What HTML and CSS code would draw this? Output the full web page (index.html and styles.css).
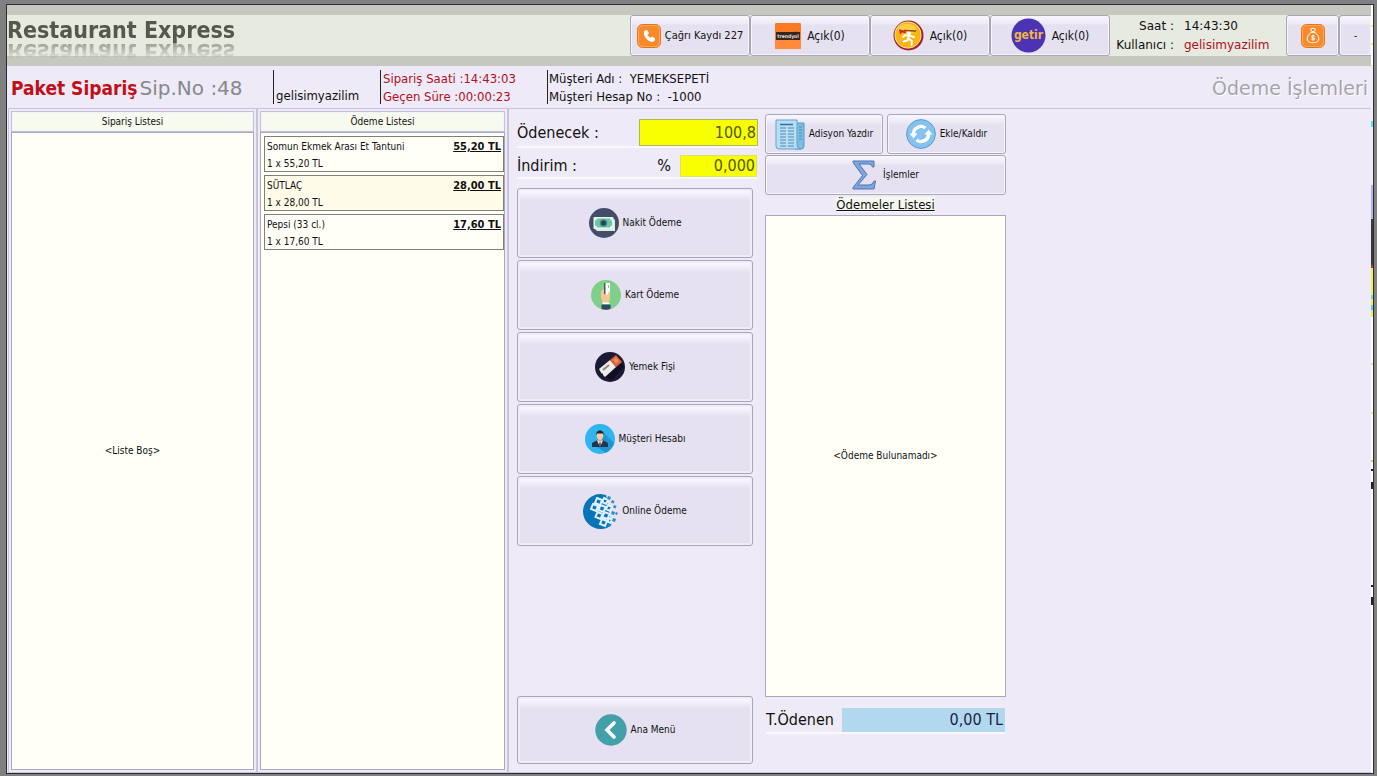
FILE: index.html
```html
<!DOCTYPE html>
<html lang="tr">
<head>
<meta charset="utf-8">
<title>Restaurant Express</title>
<link rel="stylesheet" href="styles.css">
</head>
<body>
<div class="window">
  <div class="app">
    <header class="banner">
      <h1 class="brand">Restaurant Express</h1>
      <button class="btn top-btn">
        <svg width="24" height="24" viewBox="0 0 24 24"><rect x=".5" y=".5" width="23" height="23" rx="5" fill="#f98a2c" stroke="#e8741a"/><rect x="1.500" y="1.500" width="21" height="21" rx="4" fill="none" stroke="#ffab5c"/><path d="M8 6.500l2-.8 2 3.600-1.500 1.500c.7 1.500 1.700 2.400 3 3l1.600-1.400 3 2.200c0 2-1.300 3.300-3 3.300C11 17.500 7 13 6.800 9c0-1.200.4-2 1.200-2.500z" fill="#fff"/></svg>
        <span>Çağrı Kaydı 227</span>
      </button>
      <button class="btn top-btn open">
        <svg width="26" height="26" viewBox="0 0 26 26"><rect width="26" height="26" rx="1" fill="#f97a24"/><rect y="16" width="26" height="10" fill="#ff8a3c"/><path d="M17 9l5-1 1 2h-6z" fill="#e8542a"/><rect x="1" y="9" width="24" height="8" fill="#33271f"/><text x="13" y="15" text-anchor="middle" font-size="5" font-weight="bold" fill="#e8dccf">trendyol</text></svg>
        <span>Açık(0)</span>
      </button>
      <button class="btn top-btn open">
        <svg width="31" height="31" viewBox="0 0 31 31"><circle cx="15.500" cy="15.500" r="15" fill="#a61d22"/><circle cx="15" cy="15" r="13.500" fill="#fff1c2"/><circle cx="15" cy="15" r="12.700" fill="#fbb416"/><ellipse cx="14" cy="9" rx="9" ry="5" fill="#fdd044"/><path d="M6 9l4 1.500 2-1 1 4-4-1-2 2z" fill="#e2231a"/><path d="M12 10.500l11 .5" stroke="#8a4a12" stroke-width="1.300"/><circle cx="16" cy="13.500" r="2" fill="#fff"/><path d="M16 16l-4-1-2 2M15.500 16.500l-1 4-4 1M16 19l3 2-.5 4M17 16l4 1" fill="none" stroke="#fff" stroke-width="1.900" stroke-linecap="round" stroke-linejoin="round"/></svg>
        <span>Açık(0)</span>
      </button>
      <button class="btn top-btn open">
        <svg width="35" height="35" viewBox="0 0 35 35"><circle cx="17.500" cy="17.500" r="17" fill="#4b33b4"/><text x="17.500" y="21" text-anchor="middle" font-size="12" font-weight="bold" fill="#f3b545">getir</text></svg>
        <span>Açık(0)</span>
      </button>
      <dl class="session">
        <dt>Saat :</dt><dd>14:43:30</dd>
        <dt>Kullanıcı :</dt><dd class="user">gelisimyazilim</dd>
      </dl>
      <button class="btn money-btn" aria-label="Kasa">
        <svg width="24" height="24" viewBox="0 0 24 24"><rect x=".5" y=".5" width="23" height="23" rx="5" fill="#f98a2c" stroke="#e8741a"/><rect x="1.500" y="1.500" width="21" height="21" rx="4" fill="none" stroke="#ffab5c"/><path d="M9.500 5l1.200 2.500h2.600L14.500 5l-2.500-.8zM10 8.500c-2.500 2-3.800 4-3.800 6.500s2 3.700 5.800 3.700 5.800-1.200 5.800-3.700-1.300-4.500-3.800-6.500z" fill="none" stroke="#fff"/><path d="M13.700 12.200c-.8-.8-3.200-.8-3.200.4 0 1.400 3.200.7 3.200 2.200 0 1.300-2.600 1.200-3.400.3M12 10.800v5.800" fill="none" stroke="#fff"/></svg>
      </button>
      <button class="btn min-btn">-</button>
    </header>

    <section class="order">
      <p class="order-type"><b>Paket Sipariş</b><span>Sip.No :48</span></p>
      <p class="cell waiter">gelisimyazilim</p>
      <p class="cell times">Sipariş Saati :14:43:03<br>Geçen Süre :00:00:23</p>
      <p class="cell customer">Müşteri Adı :&nbsp; YEMEKSEPETİ<br>Müşteri Hesap No :&nbsp; -1000</p>
      <h2 class="page-title">Ödeme İşlemleri</h2>
    </section>

    <main class="content">
      <section class="panel">
        <h3 class="panel-title">Sipariş Listesi</h3>
        <div class="list empty">&lt;Liste Boş&gt;</div>
      </section>
      <section class="panel">
        <h3 class="panel-title">Ödeme Listesi</h3>
        <ul class="list items">
          <li class="item"><span>Somun Ekmek Arası Et Tantuni</span><b>55,20 TL</b><span>1 x 55,20 TL</span></li>
          <li class="item alt"><span>SÜTLAÇ</span><b>28,00 TL</b><span>1 x 28,00 TL</span></li>
          <li class="item"><span>Pepsi (33 cl.)</span><b>17,60 TL</b><span>1 x 17,60 TL</span></li>
        </ul>
      </section>

      <div class="work">
        <section class="pay">
          <div class="field due">
            <label for="due">Ödenecek :</label>
            <input id="due" value="100,8">
          </div>
          <div class="field discount">
            <label for="discount">İndirim :</label>
            <span>%</span>
            <input id="discount" value="0,000">
          </div>
          <div class="methods">
            <button class="btn method">
              <svg width="30" height="30" viewBox="0 0 30 30"><circle cx="15" cy="15" r="15" fill="#434d6b"/><path d="M5 10h18l3 2v11H8l-3-3z" fill="#d9efdf"/><rect x="4.500" y="9" width="20" height="12" rx="1" fill="#e5f5e6"/><path d="M8 10.500h13q0 2 2 2v5q-2 0-2 2H8q0-2-2-2v-5q2 0 2-2z" fill="#6cc5a4"/><circle cx="14.500" cy="15" r="3.700" fill="#3f8f84"/><circle cx="14.500" cy="15" r="2.500" fill="#29445a"/></svg>
              <span>Nakit Ödeme</span>
            </button>
            <button class="btn method">
              <svg width="30" height="30" viewBox="0 0 30 30"><circle cx="15" cy="15" r="15" fill="#7fd08a"/><path d="M13 3h6v12h-6z" fill="#fff"/><path d="M13 3h1.500v12H13z" fill="#4d5b55"/><path d="M17 5h1v3h-1z" fill="#9ba"/><path d="M10 12l2-3 1 1v4l4 1 .5-3.500L19 12v7l-2 4h-5l-2-5z" fill="#f5c795"/><path d="M11.500 22.500h7v2h-7z" fill="#fff"/><path d="M10.500 24.500h9V29a15 15 0 0 1-9 0z" fill="#304868"/></svg>
              <span>Kart Ödeme</span>
            </button>
            <button class="btn method">
              <svg width="30" height="30" viewBox="0 0 30 30"><circle cx="15" cy="15" r="15" fill="#1b1a35"/><path d="M10 25L27 11l2 3.500-12 14z" fill="#0f0e22"/><path d="M4 17L15 8l6 7-11 10-2-2 0-1.500-1.500 0z" fill="#eeece4"/><path d="M15 8l6-5 6 7-6 5z" fill="#dd6338"/><path d="M18 8l3-2.500 3 3.500-3 2.500z" fill="#ef8a5d"/><path d="M8 18l6-5" stroke="#8e8c86" stroke-width="2"/></svg>
              <span>Yemek Fişi</span>
            </button>
            <button class="btn method">
              <svg width="30" height="30" viewBox="0 0 30 30"><circle cx="15" cy="15" r="15" fill="#31b5f0"/><path d="M19 9l10 10a15 15 0 0 1-8 9.700L12 23z" fill="#1f96d2"/><path d="M7 23v-3c0-2 3-2.500 5-3.500h6c2 1 5 1.500 5 3.500v3z" fill="#26334b"/><path d="M12 16.500l3 6 3-6z" fill="#fff"/><path d="M14.500 18h1l.4 3-.9 1.500-.9-1.500z" fill="#39465e"/><path d="M13 14h4v3l-2 1.500-2-1.500z" fill="#e2ab80"/><ellipse cx="15" cy="11.500" rx="3.300" ry="4" fill="#f7cda4"/><path d="M11.300 11c-.8-6 8.200-6 7.400 0l-1-1.500h-5.400z" fill="#242126"/></svg>
              <span>Müşteri Hesabı</span>
            </button>
            <button class="btn method">
              <svg width="35" height="35" viewBox="0 0 35 35"><path d="M17.500 0C8 0 0 8 0 17.500S8 35 17.500 35c5 0 8-1.500 11-4.500L24 5l-1-4z" fill="#0874b8"/><g fill="#0874b8" stroke="#dff1fb" stroke-width="2"><path d="M14 4l5 2-2 5-5-2zM21 4l4 2-2 4-4-2zM10 10l5 2-2 5-5-2zM17.500 11l5 2-2 5-5-2zM25 11l4 2-2 4-4-2zM14.500 18l5 2-2 5-5-2zM21.500 18l5 2-2 5-5-2zM19 25l5 2-2 5-5-2zM26 24l3 1.500-1.500 3.500-3-1.500z"/></g><path d="M25 2l3 1-1 3-3-1zM29 6l2.500 1-1 2.500-2.500-1zM31 11l2.500 1-1 2.500-2.500-1zM29 17l3 1-1 3-3-1zM33 18l2 1-1 2-2-1zM30 24l3 1-1 3-3-1zM26 30l2 1-1 2-2-1z" fill="#2a8cc8"/></svg>
              <span>Online Ödeme</span>
            </button>
          </div>
          <button class="btn method home">
            <svg width="32" height="32" viewBox="0 0 32 32"><circle cx="16" cy="16" r="15.700" fill="#43a0aa"/><path d="M19 9l-7 7 7 7" fill="none" stroke="#fff" stroke-width="3.600" stroke-linecap="round"/></svg>
            <span>Ana Menü</span>
          </button>
        </section>

        <section class="payments">
          <div class="tools">
            <button class="btn tool">
              <svg width="30" height="31" viewBox="0 0 30 31"><path d="M20 4h9v23q0 3-3 3h-6z" fill="#7dbde4" stroke="#4f9bcb"/><path d="M1 1h21v25q0 4 4 4H4q-3 0-3-3z" fill="#b9def3" stroke="#5ba5d2"/><path d="M5 5.500h13" stroke="#3a6ea5" stroke-width="1.600"/><path d="M5 9h6M5 12h6M5 15h6M5 18h6M5 21h6M5 24h6M5 27h6M13 9h6M13 12h6M13 15h6M13 18h6M13 21h6M13 24h6M13 27h6M24 8h3M24 11h3M24 14h3M24 17h3M24 20h3" stroke="#5189b5"/></svg>
              <span>Adisyon Yazdır</span>
            </button>
            <button class="btn tool">
              <svg width="30" height="30" viewBox="0 0 30 30"><circle cx="15" cy="15" r="14.400" fill="#84c3f0" stroke="#5a9bd4"/><path d="M7.500 15.500a7.500 7.500 0 0 1 12-6.500M22.500 14.500a7.500 7.500 0 0 1-12 6.500" fill="none" stroke="#fff" stroke-width="3.400"/><path d="M3.500 14.500h8l-4 5zM26.500 15.500h-8l4-5z" fill="#fff"/></svg>
              <span>Ekle/Kaldır</span>
            </button>
            <button class="btn tool wide">
              <svg width="24" height="30" viewBox="0 0 24 30"><path d="M1 1h21v6h-1.500q-.5-3-4-3H7l8 10.500L6 25h11q4 0 5-4h1.500L22 29H1v-1.500l9.500-12L1 2.500z" fill="#7ea6dc" stroke="#4f75b8"/></svg>
              <span>İşlemler</span>
            </button>
          </div>
          <h3 class="payments-title"><span>Ödemeler Listesi</span></h3>
          <div class="list empty">&lt;Ödeme Bulunamadı&gt;</div>
          <div class="total">
            <label for="total">T.Ödenen</label>
            <output id="total">0,00 TL</output>
          </div>
        </section>
      </div>
    </main>
  </div>
  <div class="edge"></div>
</div>
</body>
</html>
```
FILE: styles.css
```css
* { box-sizing: border-box; }

body {
  margin: 0;
  height: 100vh;
  padding: 4px 3px 2px 6px;
  background: #808080;
  color: #111;
  font: 10px/14px "DejaVu Sans Condensed", Tahoma, sans-serif;
}

h1, h2, h3, p, ul, dl, dd { margin: 0; padding: 0; font-weight: normal; }
ul { list-style: none; }
button, input { font: inherit; color: inherit; }
svg { flex: none; font-family: "DejaVu Sans Condensed", sans-serif; }

.window {
  display: flex;
  height: 100%;
  border: 1px solid #2b2b35;
  background: #eeeaf8;
}

.app {
  display: flex;
  flex: 1;
  flex-direction: column;
  min-width: 0;
}

.edge {
  width: 2px;
  background: linear-gradient(
    #fff 20px, #f0ee6c 20px 22px, #fff 22px 38px, #f0ee6c 38px 40px,
    #fff 40px 60px, #f0ee6c 60px 61px,
    #f1f0f6 61px 116px, #5ce0f0 116px 122px, #f1f0f6 122px 180px,
    #b3b0ee 180px 214px, #3a3a3a 214px 260px, #c03020 260px 263px,
    #f0f050 263px 290px, #5ce0d0 290px 294px, #f0f050 294px 300px,
    #40dce8 300px 305px, #f0f050 305px 312px, #fff 312px 358px,
    #f0ee6c 358px 360px, #fff 360px 407px, #f0ee6c 407px 409px,
    #fff 409px 455px, #e0c860 455px 457px, #fff 457px 464px,
    #222 464px 466px, #fff 466px 477px, #222 477px 484px,
    #fff 484px 580px, #222 580px 582px, #fff 582px 592px,
    #222 592px 600px, #fff 600px);
  background-position: 0 0;
}

.btn {
  display: flex;
  align-items: center;
  justify-content: center;
  gap: 4px;
  padding: 0;
  border: 1px solid #a9a6b8;
  border-radius: 3px;
  background: linear-gradient(#f8f6fe, #ece8f6 8px, #e5e1f0 9px);
  box-shadow: inset 0 0 0 1px #f6f4fd;
  white-space: nowrap;
}

.banner {
  display: flex;
  flex: none;
  height: 61px;
  border: solid #c6c8bf;
  border-width: 10px 0;
  background: #e7eae0;
}

.brand {
  height: 30px;
  margin-right: auto;
  color: #55584c;
  font-size: 23px;
  font-weight: bold;
  line-height: 30px;
  white-space: nowrap;
  -webkit-box-reflect: below -8px linear-gradient(transparent 25%, rgba(0, 0, 0, .7));
}

.top-btn { width: 120px; font-size: 11px; }
.top-btn.open { gap: 6px; font-size: 12px; }
.money-btn { width: 53px; }
.min-btn { width: 32px; border-right: 0; border-radius: 3px 0 0 3px; }

.session {
  display: grid;
  grid-template-columns: 64px auto;
  align-content: center;
  gap: 0 10px;
  width: 176px;
  font: 12px/19px "DejaVu Sans", sans-serif;
  white-space: nowrap;
}
.session dt { text-align: right; }
.session .user { color: #b01020; }

.order {
  display: flex;
  flex: none;
  height: 42px;
  padding: 4px 3px 0 4px;
  font-size: 13px;
  line-height: 18px;
  white-space: nowrap;
}
.order-type {
  display: flex;
  gap: 2px;
  width: 262px;
  color: #888;
  font: 20px/36px "DejaVu Sans", sans-serif;
}
.order-type b { color: #c01018; font: bold 19px/36px "DejaVu Sans Condensed", sans-serif; }
.cell { height: 34px; padding-left: 2px; border-left: 1px solid #222; }
.waiter { width: 107px; padding-top: 17px; }
.times { width: 167px; color: #b01020; }
.customer { flex: 1; padding-left: 1px; }
.page-title {
  color: #a5a3ab;
  font: 19px/36px "DejaVu Sans", sans-serif;
  text-shadow: 1px 1px #fff;
}

.content { display: flex; flex: 1; min-height: 0; }

.panel {
  display: flex;
  flex-direction: column;
  width: 249px;
  margin-left: 1px;
  padding: 2px;
  border: 1px solid #c8c4da;
}
.panel + .panel { margin-left: 0; width: 251px; }
.panel-title {
  height: 21px;
  border: 1px solid #c4c0d6;
  box-shadow: inset 0 0 0 1px #f4f2fb;
  background: #f7faef;
  font-size: 10px;
  line-height: 19px;
  text-align: center;
}
.list {
  flex: 1;
  border: 1px solid #aaa7be;
  background: #fffff8;
}
.empty { display: flex; align-items: center; justify-content: center; }

.items { display: flex; flex-direction: column; gap: 3px; padding: 3px 0 0 3px; }
.item {
  display: grid;
  grid-template-columns: 1fr auto;
  height: 36px;
  padding: 1px 2px;
  border: 1px solid #808078;
  line-height: 17px;
}
.item.alt { background: #fffbe9; }
.item b { font-size: 11px; text-decoration: underline; }

.work {
  display: flex;
  flex: 1;
  gap: 7px;
  padding: 5px 0 4px 8px;
  border: solid #c8c4da;
  border-width: 1px 0 1px 1px;
}

.pay { display: flex; flex-direction: column; width: 241px; padding: 5px 0 4px; }
.field {
  display: flex;
  align-items: center;
  font-size: 16px;
  line-height: 24px;
  border-bottom: 2px solid #faf8ff;
}
.field label { margin-right: auto; }
.field input {
  width: 77px;
  height: 22px;
  padding: 0 1px;
  border: 1px solid #e2e060;
  border-radius: 0;
  background: #f7ff00;
  color: #55561a;
  text-align: right;
}
.due { height: 29px; }
.due input { width: 119px; height: 27px; border-color: #b4b26a; }
.discount { height: 24px; margin: 7px 1px 9px 0; }
.discount span { margin-right: 9px; }

.methods { display: flex; flex-direction: column; gap: 2px; }
.method {
  height: 70px;
  margin-right: 5px;
  background: linear-gradient(#fbfaff, #edeaf8 8px, #ebe7f5 9px, #e5e1f0 11px);
  box-shadow: inset 0 0 0 2px #f0edf9;
}
.home { height: 68px; margin-top: auto; }

.payments { display: flex; flex-direction: column; width: 241px; }
.tools { display: grid; grid-template-columns: 118px 119px; gap: 1px 4px; }
.tool { height: 40px; }
.wide { grid-column: 1 / 3; gap: 7px; }
.payments-title {
  height: 20px;
  font-size: 13px;
  line-height: 20px;
  text-align: center;
  text-decoration: underline;
}
.payments-title span { background: #f5f8ee; }
.total {
  display: flex;
  align-items: center;
  height: 26px;
  margin: 11px 1px 34px;
  border-bottom: 2px solid #faf8ff;
  font-size: 16px;
}
.total output {
  width: 163px;
  margin-left: auto;
  padding-right: 2px;
  background: #b2d8ee;
  color: #1a1f4a;
  line-height: 24px;
  text-align: right;
}
```
